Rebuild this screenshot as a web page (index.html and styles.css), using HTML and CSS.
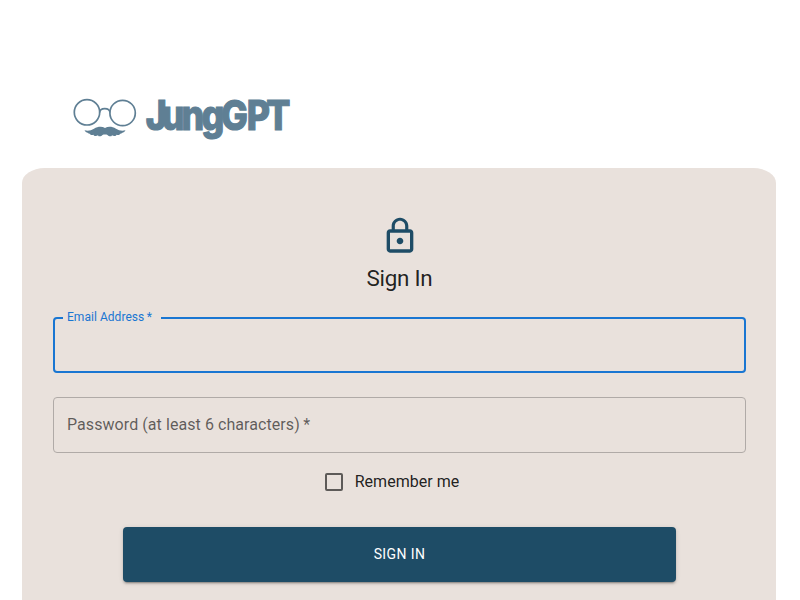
FILE: index.html
```html
<!DOCTYPE html>
<html lang="en">
<head>
<meta charset="utf-8">
<title>JungGPT - Sign In</title>
<link rel="stylesheet" href="styles.css">
</head>
<body>
<header class="header">
  <svg class="logo" width="240" height="60" viewBox="70 92 240 60" role="img" aria-label="JungGPT">
    <g fill="none" stroke="#5f7f94" stroke-width="1.7">
      <circle cx="87" cy="112.3" r="12.7"/>
      <circle cx="122.6" cy="113" r="12.7"/>
      <path d="M99.6 112.5C100 107.300 109.500 107.300 110 112.500"/>
    </g>
    <path fill="#5f7f94" d="M84.500 130.200C88 131.200 91 130.500 94 128.700C98 126.300 102 126.100 105 128.100C108 126.100 112 126.300 116 128.700C119 130.500 122 131.200 125.500 130.200C124.500 132 123 132.700 121.500 133C122 133.600 121.200 134 120 133.800C120 135 118 135.500 116.500 134.700C116.500 136 113.500 136.500 112 135.200C111.500 137 108.500 136.500 107.500 135C106.500 134.400 103.500 134.400 102.500 135C101.500 136.500 98.500 137 98 135.200C96.500 136.500 93.500 136 93.500 134.700C92 135.500 90 135 90 133.800C88.800 134 88 133.600 88.500 133C87 132.700 85.500 132 84.500 130.200Z"/>
    <text class="wordmark" transform="translate(0 130.300) scale(.87 1)" x="167.500 186 208.500 231.500 254 283.500 306">JungGPT</text>
  </svg>
</header>
<main class="card">
  <svg class="lock" viewBox="0 0 24 24"><path d="M12 17c1.100 0 2-.9 2-2s-.9-2-2-2-2 .9-2 2 .9 2 2 2zm6-9h-1V6c0-2.760-2.240-5-5-5S7 3.240 7 6v2H6c-1.100 0-2 .9-2 2v10c0 1.100.9 2 2 2h12c1.100 0 2-.9 2-2V10c0-1.100-.9-2-2-2zM8.900 6c0-1.710 1.390-3.100 3.100-3.100s3.100 1.390 3.100 3.100v2H8.900V6zM18 20H6V10h12v10z"/></svg>
  <h1 class="title">Sign In</h1>
  <form class="form">
    <fieldset class="field field-focused"><legend>Email Address&thinsp;*</legend></fieldset>
    <div class="field field-idle">Password (at least 6 characters)&thinsp;*</div>
    <label class="remember"><span class="box"></span>Remember me</label>
    <button class="submit" type="button">SIGN IN</button>
  </form>
</main>
</body>
</html>
```
FILE: styles.css
```css
* { box-sizing: border-box; }
body {
  margin: 0;
  height: 600px;
  overflow: hidden;
  background: #fff;
  color: rgba(0, 0, 0, .87);
  font-family: Roboto, sans-serif;
}
.header { height: 168px; padding: 92px 0 0 70px; }
.logo { display: block; overflow: visible; }
.wordmark {
  font: 800 41px Inter, sans-serif;
  fill: #5f7f94;
  stroke: #5f7f94;
  stroke-width: 1.2px;
}
.card {
  display: flex;
  flex-direction: column;
  align-items: center;
  width: 754px;
  height: 432px;
  margin-left: 22px;
  padding: 48px 30px 0 31px;
  background: #e9e1dc;
  border-radius: 22.600px 22.600px 0 0 / 15px 15px 0 0;
}
.lock { width: 40px; height: 40px; fill: #1e4c66; flex: none; }
.title { margin: 6px 0 0; font-size: 22.400px; font-weight: 400; line-height: 32px; letter-spacing: -.25px; }
.form { display: flex; flex-direction: column; align-items: center; width: 100%; padding-top: 17px; }
.field { width: 100%; margin: 0; border-radius: 4px; }
.field-focused { height: 62px; padding: 0 8px; border: 2px solid #1976d2; }
.field-focused legend {
  padding: 0 9px 2px 4px;
  color: #1976d2;
  font-size: 12px;
  line-height: 12px;
  letter-spacing: .04px;
}
.field-idle {
  height: 56px;
  margin-top: 24px;
  padding: 0 13px;
  border: 1px solid #b0aaa7;
  color: rgba(0, 0, 0, .6);
  font-size: 16px;
  line-height: 54px;
  letter-spacing: .07px;
}
.remember {
  display: flex;
  align-items: center;
  gap: 12px;
  height: 42px;
  margin-top: 8px;
  margin-right: 15px;
  font-size: 16px;
  line-height: 18px;
  padding-bottom: 1px;
  letter-spacing: .03px;
}
.box { width: 18px; height: 18px; margin-top: 1px; border: 2px solid #5d5a58; border-radius: 2px; }
.submit {
  width: 553px;
  height: 55px;
  margin-top: 24px;
  padding-bottom: 3px;
  border: 0;
  border-radius: 4px;
  background: #1e4c66;
  color: #fff;
  font: 400 14px Roboto, sans-serif;
  letter-spacing: .4px;
  box-shadow: 0 3px 1px -2px rgba(0, 0, 0, .2), 0 2px 2px rgba(0, 0, 0, .14), 0 1px 5px rgba(0, 0, 0, .12);
}
```
